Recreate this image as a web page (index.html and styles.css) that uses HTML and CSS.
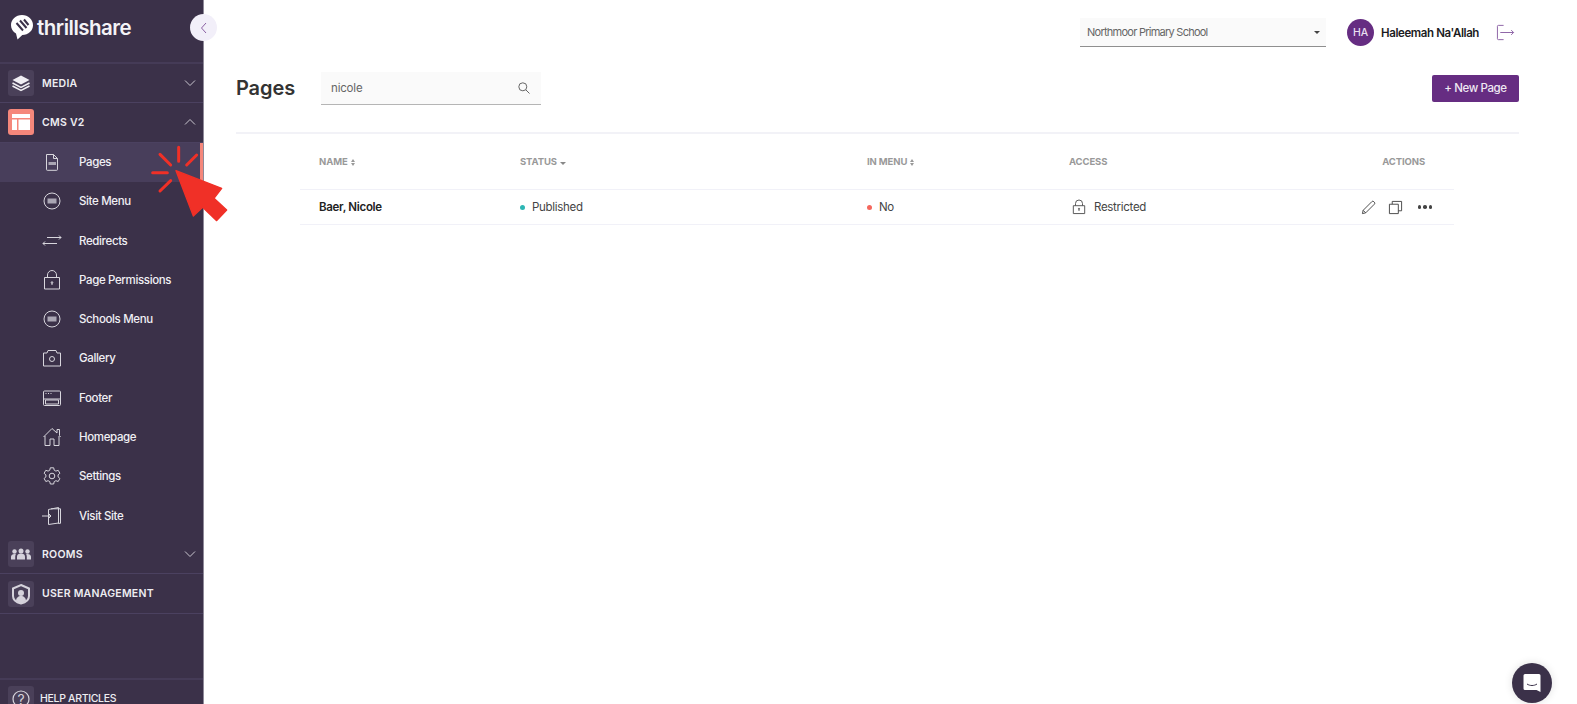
FILE: index.html
```html
<!DOCTYPE html>
<html lang="en">
<head>
<meta charset="utf-8">
<title>Pages</title>
<link rel="stylesheet" href="styles.css">
</head>
<body>
<div class="app">
  <aside class="sidebar">
    <div class="brand">
      <svg class="brand-mark" viewBox="0 0 24 28"><path fill="#fff" d="M12 2C5.800 2 1 6.500 1 12.200c0 3.600 1.900 6.500 5 8.300l1.500 6 4.800-4.500C18.500 21.800 23 17.500 23 12.200 23 6.500 18.200 2 12 2z"/><path stroke="#3b3149" stroke-width="2" fill="none" d="M6.500 10l6.500 7.500M10 7.500l6.500 7.500M14 6.500l4.500 5.500"/></svg>
      <span class="brand-name">thrillshare</span>
    </div>
    <nav class="nav">
      <div class="section">
        <span class="tile"><svg viewBox="0 0 26 26" class="tile-icon"><path fill="#f0eef3" d="M13 5.500l8.500 4.500-8.500 4.500L4.500 10z"/><path fill="none" stroke="#f0eef3" stroke-width="1.500" d="M4.500 13l8.500 4.500 8.500-4.500M4.500 16l8.500 4.500 8.500-4.500"/></svg></span>
        <span class="section-label">MEDIA</span>
        <svg class="chev" viewBox="0 0 12 8"><path d="M1 1.500l5 5 5-5"/></svg>
      </div>
      <div class="section">
        <span class="tile tile-active"><svg viewBox="0 0 26 26" class="tile-icon"><path fill="#fff" d="M4 5h18v4H4zM4 10.500h5V21H4zM10.500 10.500H22V21H10.500z"/></svg></span>
        <span class="section-label">CMS V2</span>
        <svg class="chev" viewBox="0 0 12 8"><path d="M1 6.500l5-5 5 5"/></svg>
      </div>
      <div class="item item-active">
        <span class="item-icon"><svg viewBox="0 0 20 20"><path d="M4.500 2.500h7l4 4v11a.8.800 0 0 1-.8.800H5.300a.8.800 0 0 1-.8-.8zM11.500 2.500v4h4"/><path class="solid" d="M6.500 10h7.500v3H6.500z"/></svg></span>
        <span>Pages</span>
      </div>
      <div class="item">
        <span class="item-icon"><svg viewBox="0 0 20 20"><circle cx="10" cy="10" r="8"/><path class="solid" d="M5.500 7.500h9v5h-9z"/></svg></span>
        <span>Site Menu</span>
      </div>
      <div class="item">
        <span class="item-icon"><svg viewBox="0 0 20 20"><path d="M5 6.500h14M17 4.500l2 2-2 2M15 12.500H1M3 10.500l-2 2 2 2"/></svg></span>
        <span>Redirects</span>
      </div>
      <div class="item">
        <span class="item-icon"><svg viewBox="0 0 20 20"><path d="M2.500 7.500h15v11.500h-15zM5.500 7.500V5a4.500 4.500 0 0 1 9 0v2.500"/><path d="M10 12.500v2.500"/><circle cx="10" cy="12.500" r=".8"/></svg></span>
        <span>Page Permissions</span>
      </div>
      <div class="item">
        <span class="item-icon"><svg viewBox="0 0 20 20"><circle cx="10" cy="10" r="8"/><path class="solid" d="M5.500 7.500h9v5h-9z"/></svg></span>
        <span>Schools Menu</span>
      </div>
      <div class="item">
        <span class="item-icon"><svg viewBox="0 0 20 20"><path d="M1.500 5h3.500l1-2.500h8l1 2.500h3.500v13h-17z"/><circle cx="10" cy="11" r="2.500"/></svg></span>
        <span>Gallery</span>
      </div>
      <div class="item">
        <span class="item-icon"><svg viewBox="0 0 20 20"><rect x="1.500" y="3" width="17" height="14.500" rx="1"/><path d="M3.500 12h13v4h-13zM1.500 11h17M3.500 5.500h1M6 5.500h1M8.500 5.500h1"/></svg></span>
        <span>Footer</span>
      </div>
      <div class="item">
        <span class="item-icon"><svg viewBox="0 0 20 20"><path d="M1.500 10L10 1.500l5 4.500V2.500h2.500v6l1 1.500M3 9v9.500h5v-6.500h4v6.500h5V9"/></svg></span>
        <span>Homepage</span>
      </div>
      <div class="item">
        <span class="item-icon"><svg viewBox="0 0 20 20"><circle cx="10" cy="10" r="2.800"/><path d="M8.300 1.800h3.400l.5 2.400 1.700.9 2.300-.8 1.700 3-1.800 1.600v2l1.800 1.600-1.700 3-2.300-.8-1.700.9-.5 2.400H8.300l-.5-2.400-1.700-.9-2.300.8-1.700-3 1.800-1.600v-2L2.100 7.300l1.700-3 2.300.8 1.700-.9z"/></svg></span>
        <span>Settings</span>
      </div>
      <div class="item">
        <span class="item-icon"><svg viewBox="0 0 20 20"><path d="M6.500 3.500l0 15 10-1.500V1.500l-10 2zM9 2.800h9.500v14.500H16M0 10h9M6.500 7.500L9 10l-2.500 2.500"/></svg></span>
        <span>Visit Site</span>
      </div>
      <div class="section">
        <span class="tile"><svg viewBox="0 0 26 26" class="tile-icon"><g fill="#d5d2db"><circle cx="13" cy="10" r="2.500"/><path d="M9 18.500v-3c0-1.800 1.800-3 4-3s4 1.200 4 3v3z"/><circle cx="6.500" cy="10.500" r="2.200"/><path d="M3 18.500v-2.800c0-1.500 1.500-2.700 3.500-2.700l1.500.3c-.5.600-.8 1.400-.8 2.500v2.700z"/><circle cx="19.500" cy="10.500" r="2.200"/><path d="M23 18.500v-2.800c0-1.500-1.500-2.700-3.500-2.700l-1.500.3c.5.600.8 1.400.8 2.500v2.700z"/></g></svg></span>
        <span class="section-label">ROOMS</span>
        <svg class="chev" viewBox="0 0 12 8"><path d="M1 1.500l5 5 5-5"/></svg>
      </div>
      <div class="section">
        <span class="tile"><svg viewBox="0 0 26 26" class="tile-icon"><path fill="none" stroke="#d5d2db" stroke-width="2" d="M13 4l8 3.500V15c0 4-3.500 6.500-8 7.500C8.500 21.500 5 19 5 15V7.500z"/><circle cx="13" cy="12" r="3" fill="#d5d2db"/><path fill="#d5d2db" d="M8 20c0-3 2.200-5 5-5s5 2 5 5l-5 2.500z"/></svg></span>
        <span class="section-label">USER MANAGEMENT</span>
      </div>
    </nav>
    <div class="help">
      <span class="tile"><svg viewBox="0 0 26 26" class="tile-icon"><circle cx="13" cy="13" r="8" fill="none" stroke="#d5d2db" stroke-width="1.200"/></svg><span class="help-mark">?</span></span>
      <span class="help-label">HELP ARTICLES</span>
    </div>
  </aside>

  <main class="main">
    <header class="topbar">
      <div class="school">
        <span>Northmoor Primary School</span>
        <span class="caret"></span>
      </div>
      <div class="avatar">HA</div>
      <span class="user">Haleemah Na'Allah</span>
      <svg class="logout" viewBox="0 0 20 20"><path d="M8 2.500H2.500a1 1 0 0 0-1 1v13a1 1 0 0 0 1 1H8M4.500 10H18.500M16 7.500l2.500 2.500-2.500 2.500"/></svg>
    </header>

    <section class="title-row">
      <h1 class="title">Pages</h1>
      <div class="search">
        <span>nicole</span>
        <svg class="search-icon" viewBox="0 0 14 14"><circle cx="5.800" cy="5.800" r="4"/><path d="M8.800 8.800l3.700 3.700"/></svg>
      </div>
      <button class="new-page">+ New Page</button>
    </section>

    <section class="table">
      <div class="row row-head">
        <span>NAME <i class="sort"></i></span>
        <span>STATUS <i class="sort-down"></i></span>
        <span>IN MENU <i class="sort"></i></span>
        <span>ACCESS</span>
        <span class="head-actions">ACTIONS</span>
      </div>
      <div class="row row-body">
        <strong class="name">Baer, Nicole</strong>
        <span class="cell"><i class="dot dot-teal"></i>Published</span>
        <span class="cell"><i class="dot dot-red"></i>No</span>
        <span class="cell access">
          <svg class="lock" viewBox="0 0 16 18"><path d="M1.500 7.500h13v9h-13zM4 7.500V5a4 4 0 0 1 8 0v2.500"/><path d="M8 11v2.500"/><circle cx="8" cy="11" r=".6"/></svg>
          Restricted
        </span>
        <span class="actions">
          <svg class="act" viewBox="0 0 16 16"><path d="M1.500 14.500l.8-3.500L11.500 1.800a1.500 1.500 0 0 1 2.200 0l.5.500a1.500 1.500 0 0 1 0 2.200L5 13.700zM2.300 11L5 13.700"/></svg>
          <svg class="act" viewBox="0 0 16 16"><path d="M1.500 4.500h9.500v10H1.500zM4.500 4.500V1.500h10v10h-3.500"/></svg>
          <span class="more"><i></i><i></i><i></i></span>
        </span>
      </div>
    </section>
  </main>

  <button class="collapse"><svg viewBox="0 0 8 12"><path d="M6 1L1.500 6 6 11"/></svg></button>
  <svg class="pointer" viewBox="0 0 300 300"><path fill="#f03027" stroke="#f03027" stroke-width="4" stroke-linejoin="round" d="M108 122L245 175 222 205 260 240 230 272 188 232 160 258z"/><path fill="none" stroke="#f03027" stroke-width="9" stroke-linecap="round" d="M116 52V94M140 105L170 75M60 73L92 105M38 128H82M60 183L92 152"/></svg>
  <button class="chat"><svg viewBox="0 0 20 20"><path fill="#fff" d="M3 1h14a1.500 1.500 0 0 1 1.500 1.500V19l-4-2H3a1.500 1.500 0 0 1-1.500-1.500v-13A1.500 1.500 0 0 1 3 1z"/><path fill="none" stroke="#3b3149" stroke-width="1" d="M5 11c3 2 7 2 10 0"/></svg></button>
</div>
</body>
</html>
```
FILE: styles.css
```css
* { box-sizing: border-box; }
html, body { margin: 0; height: 100%; overflow: hidden; }
body { font-family: Inter, "Liberation Sans", sans-serif; color: #222; background: #fff; }
.app { position: relative; display: flex; width: 100%; height: 704px; overflow: hidden; }

.sidebar { display: flex; flex-direction: column; flex: 0 0 204px; height: 704px; background: #3b3149; border-right: 1px solid #8f8a99; color: #f1f0f4; overflow: hidden; }
.brand { display: flex; align-items: center; gap: 3px; flex: 0 0 64px; padding: 0 0 8px 10px; border-bottom: 2px solid #453b57; }
.brand-mark { width: 24px; height: 28px; }
.brand-name { font-size: 20.5px; font-weight: 600; letter-spacing: -.5px; color: #f4f3f6; }

.nav { display: flex; flex-direction: column; flex: 1; }
.section { display: flex; align-items: center; height: 39.27px; padding-left: 8px; border-bottom: 1px solid #4b4160; }
.tile { position: relative; display: flex; align-items: center; justify-content: center; flex: 0 0 26px; height: 26px; border-radius: 3px; background: #4a4059; }
.tile-active { background: #f5877b; }
.tile-icon { width: 26px; height: 26px; }
.section-label { flex: 1; margin-left: 8px; font-size: 10.5px; font-weight: 600; letter-spacing: .25px; color: #eeedf2; }
.chev { width: 12px; height: 8px; margin-right: 7px; fill: none; stroke: #c9c6cf; stroke-width: 1; }

.item { display: flex; align-items: center; height: 39.27px; padding-left: 42px; font-size: 11.5px; font-weight: 500; letter-spacing: -.36px; color: #f0eff4; }
.item-active { background: #483e5b; border-right: 3px solid #f5877b; }
.item-icon { display: flex; justify-content: center; width: 20px; margin-right: 17px; }
.item-icon svg { width: 20px; height: 20px; fill: none; stroke: #d8d6dd; stroke-width: 1; }
.item-icon .solid { fill: #aaa6b4; stroke: none; }

.help { display: flex; align-items: flex-start; flex: 0 0 26px; min-height: 0; padding: 6px 0 0 8px; border-top: 2px solid #453b57; }
.help-mark { position: absolute; font-size: 14px; color: #d5d2db; }
.help-label { margin-left: 6px; font-size: 10.5px; line-height: 25px; font-weight: 500; letter-spacing: -.32px; color: #eeedf2; }

.main { flex: 1; min-width: 0; padding: 0 58px 0 32px; }

.topbar { display: flex; align-items: center; height: 65px; padding-right: 4px; font-size: 11px; }
.school { display: flex; align-items: center; justify-content: space-between; width: 246px; height: 29px; margin-left: auto; padding: 0 6px 0 7px; background: #fafafa; border-bottom: 1px solid #8f8f8f; color: #666; letter-spacing: -.75px; }
.caret { width: 0; height: 0; border: 3px solid transparent; border-top: 3px solid #444; border-bottom: 0; }
.avatar { display: flex; align-items: center; justify-content: center; width: 27px; height: 27px; margin-left: 21px; border-radius: 50%; background: #662d82; color: #e9dff0; font-size: 10.5px; font-weight: 500; }
.user { margin-left: 7px; font-size: 11.5px; font-weight: 600; letter-spacing: -.4px; color: #1b1b22; }
.logout { width: 19px; height: 19px; margin-left: 17px; fill: none; stroke: #8a5fa3; stroke-width: 1; }

.title-row { display: flex; align-items: center; height: 69px; padding-bottom: 21px; border-bottom: 2px solid #f2f2f7; }
.title { margin: 0; font-size: 20px; font-weight: 600; color: #333; letter-spacing: -.1px; }
.search { display: flex; align-items: center; justify-content: space-between; width: 220px; height: 33px; margin-left: 26px; padding: 0 10px; background: #fafafa; border-bottom: 1px solid #b5b5b5; font-size: 11.5px; letter-spacing: -.2px; color: #666; }
.search-icon { width: 14px; height: 14px; fill: none; stroke: #666; stroke-width: 1; }
.new-page { margin-left: auto; width: 87px; height: 27px; border: 0; border-radius: 2px; background: #662d82; color: #efe9f3; font: 500 11.5px Inter, "Liberation Sans", sans-serif; letter-spacing: -.4px; }

.table { margin-left: 64px; width: 1154px; }
.row { display: grid; grid-template-columns: 201px 347px 202px 1fr 120px; align-items: center; padding-left: 19px; }
.row-head { height: 56px; border-bottom: 1px solid #f1f1f8; font-size: 9.5px; font-weight: 700; letter-spacing: -.1px; color: #999; }
.row-body { height: 35px; border-bottom: 1px solid #f1f1f8; font-size: 12px; color: #333; }
.sort { display: inline-block; position: relative; width: 4px; height: 7px; margin-left: 1px; vertical-align: -.5px; }
.sort::before, .sort::after { content: ""; position: absolute; left: 0; border: 2px solid transparent; }
.sort::before { top: 0; border-bottom: 3px solid #999; border-top: 0; }
.sort::after { bottom: 0; border-top: 3px solid #999; border-bottom: 0; }
.sort-down { display: inline-block; width: 0; height: 0; margin-left: 1px; border: 3.5px solid transparent; border-top: 3.5px solid #888; border-bottom: 0; }
.head-actions { justify-self: end; margin-right: 29px; }
.name { font-size: 11.5px; font-weight: 600; letter-spacing: -.3px; color: #222; }
.cell { display: flex; align-items: center; font-size: 11.5px; letter-spacing: -.3px; color: #444; }
.dot { width: 5px; height: 5px; margin-right: 7px; border-radius: 50%; }
.dot-teal { background: #2db6b4; }
.dot-red { background: #f5675d; }
.access { gap: 8px; margin-left: 3px; }
.lock { width: 14px; height: 16px; fill: none; stroke: #555; stroke-width: 1.1; }
.actions { display: flex; align-items: center; justify-content: flex-end; gap: 12px; padding-right: 22px; }
.act { width: 15px; height: 15px; fill: none; stroke: #444; stroke-width: 1; }
.more { display: flex; gap: 2px; margin-left: 3px; }
.more i { width: 3.5px; height: 3.5px; border-radius: 50%; background: #444; }

.collapse { position: absolute; left: 190px; top: 14px; display: flex; align-items: center; justify-content: center; width: 27px; height: 27px; padding: 0; border: 0; border-radius: 50%; background: #f2eff9; }
.collapse svg { width: 8px; height: 12px; fill: none; stroke: #8a5fa3; stroke-width: 1; }
.pointer { position: absolute; left: 140px; top: 130px; width: 100px; height: 100px; }
.chat { position: absolute; left: 1512px; top: 663px; display: flex; align-items: center; justify-content: center; width: 40px; height: 40px; padding: 0; border: 0; border-radius: 50%; background: #3b3149; box-shadow: 0 0 8px rgba(0,0,0,.12); }
.chat svg { width: 20px; height: 20px; }
```
